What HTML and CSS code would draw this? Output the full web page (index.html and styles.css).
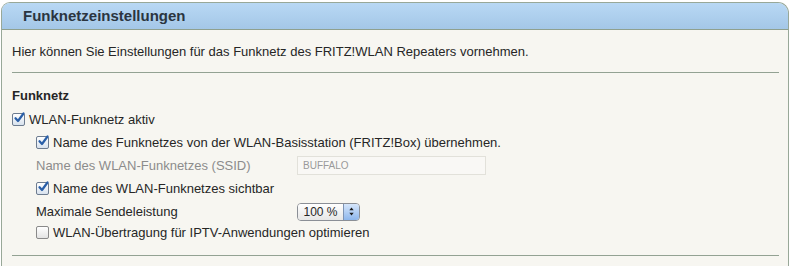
FILE: index.html
```html
<!DOCTYPE html>
<html lang="de">
<head>
  <meta charset="UTF-8" />
  <title>Funknetzeinstellungen</title>
  <link rel="stylesheet" href="styles.css">
</head>
<body>
  <div class="box">
    <div class="box-head">Funknetzeinstellungen</div>
    <div class="box-body">
      <p class="intro">Hier können Sie Einstellungen für das Funknetz des FRITZ!WLAN Repeaters vornehmen.</p>
      <hr class="sep">

      <h4 class="section">Funknetz</h4>

      <div class="row">
        <span class="cb checked"><svg viewBox="0 0 12 12"><path d="M2.5 6.2 L5 9 L10.5 1.5" /></svg></span>
        <span>WLAN-Funknetz aktiv</span>
      </div>

      <div class="sub">
        <div class="row">
          <span class="cb checked"><svg viewBox="0 0 12 12"><path d="M2.5 6.2 L5 9 L10.5 1.5" /></svg></span>
          <span>Name des Funknetzes von der WLAN-Basisstation (FRITZ!Box) übernehmen.</span>
        </div>
        <div class="row">
          <span class="label disabled">Name des WLAN-Funknetzes (SSID)</span>
          <span class="textfield">BUFFALO</span>
        </div>
        <div class="row">
          <span class="cb checked"><svg viewBox="0 0 12 12"><path d="M2.5 6.2 L5 9 L10.5 1.5" /></svg></span>
          <span>Name des WLAN-Funknetzes sichtbar</span>
        </div>
        <div class="row">
          <span class="label">Maximale Sendeleistung</span>
          <span class="select">
            <span class="select-value">100 %</span>
            <span class="select-arrows">
              <svg viewBox="0 0 8 12"><path d="M4 1.5 L6.5 4.5 H1.5 Z M4 10.5 L6.5 7.5 H1.5 Z" /></svg>
            </span>
          </span>
        </div>
        <div class="row">
          <span class="cb"></span>
          <span>WLAN-Übertragung für IPTV-Anwendungen optimieren</span>
        </div>
      </div>

      <hr class="sep bottom">
    </div>
  </div>
</body>
</html>
```

FILE: styles.css
```css
body {
  margin: 0;
  padding: 2px 2px 0 1px;
  background: #fff;
  font-family: "Liberation Sans", Arial, sans-serif;
  font-size: 13px;
  color: #262626;
}
.box {
  border: 1px solid #98a898;
  border-bottom: none;
  border-radius: 9px 11px 0 0;
  background: #f7f6f1;
  height: 270px;
  overflow: hidden;
}
.box-head {
  height: 26px;
  line-height: 26px;
  padding-left: 21px;
  font-weight: bold;
  font-size: 15px;
  color: #2b3540;
  background: linear-gradient(#b8d8f4, #a4c7e7);
  border-bottom: 1px solid #8fa08f;
}
.box-body {
  padding: 0 9px 0 10px;
}
.intro {
  margin: 0;
  padding-top: 14px;
  line-height: 16px;
}
.sep {
  border: none;
  border-top: 1px solid #93a293;
  margin: 12px 0 0 0;
}
.sep.bottom {
  margin-top: 13px;
}
.section {
  margin: 15px 0 4px 0;
  font-size: 13px;
  line-height: 16px;
  font-weight: bold;
}
.row {
  display: flex;
  align-items: center;
  height: 23px;
}
.sub {
  padding-left: 24px;
}
.sub .row:last-child {
  height: 19px;
}
.cb {
  width: 11px;
  height: 11px;
  border: 1px solid #8a8a8a;
  border-radius: 2px;
  background: linear-gradient(#ffffff, #e4e4e4);
  margin-right: 4px;
  flex: none;
  position: relative;
}
.cb svg {
  position: absolute;
  left: 0;
  top: -2px;
  width: 12px;
  height: 12px;
}
.cb svg path {
  fill: none;
  stroke: #2a5fa8;
  stroke-width: 2.2;
  stroke-linecap: round;
  stroke-linejoin: round;
}
.cb.checked {
  border-color: #6d7c90;
  background: linear-gradient(#ffffff, #d8e2ee);
}
.label {
  width: 261px;
  flex: none;
}
.disabled {
  color: #8c8c8c;
}
.textfield {
  width: 182px;
  height: 17px;
  border: 1px solid #e2e1da;
  background: #f9f8f5;
  font-size: 10px;
  line-height: 17px;
  padding-left: 5px;
  color: #9a9a9a;
}
.select {
  display: flex;
  width: 61px;
  height: 16px;
  border: 1px solid #8b8f96;
  border-radius: 4px;
  overflow: hidden;
  font-size: 12px;
}
.select-value {
  flex: 1;
  text-align: center;
  line-height: 16px;
  background: linear-gradient(#ffffff, #e6e6e6);
}
.select-arrows {
  width: 15px;
  border-left: 1px solid #7e93b3;
  background: linear-gradient(#d6e6fb, #8db6ec);
  display: flex;
  align-items: center;
  justify-content: center;
}
.select-arrows svg {
  width: 7px;
  height: 11px;
  fill: #1c1c1c;
}
```
